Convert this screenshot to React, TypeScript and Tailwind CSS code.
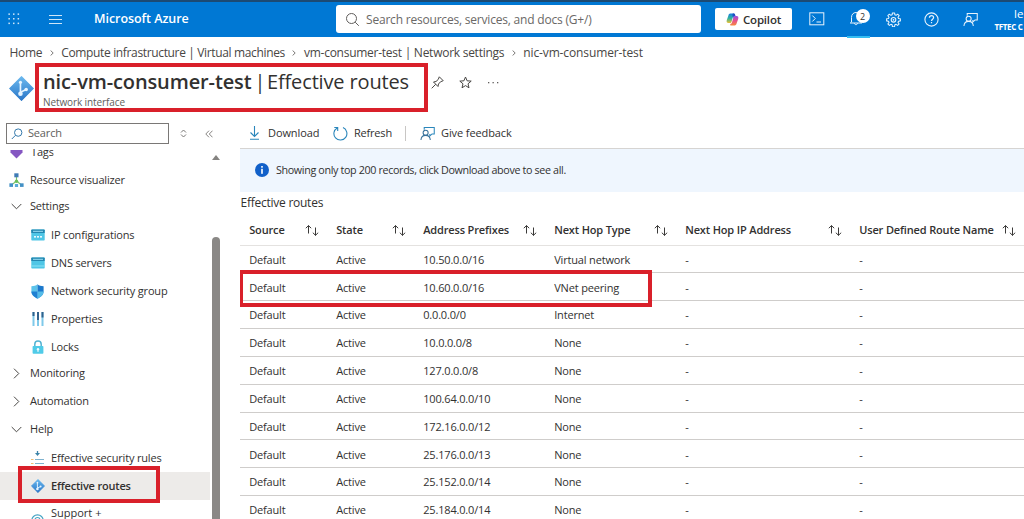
import type { ReactNode } from "react";

const ROUTES = [
  { prefix: "10.50.0.0/16", hop: "Virtual network" },
  { prefix: "10.60.0.0/16", hop: "VNet peering" },
  { prefix: "0.0.0.0/0", hop: "Internet" },
  { prefix: "10.0.0.0/8", hop: "None" },
  { prefix: "127.0.0.0/8", hop: "None" },
  { prefix: "100.64.0.0/10", hop: "None" },
  { prefix: "172.16.0.0/12", hop: "None" },
  { prefix: "25.176.0.0/13", hop: "None" },
  { prefix: "25.152.0.0/14", hop: "None" },
  { prefix: "25.184.0.0/14", hop: "None" },
];

const COLUMNS = ["Source", "State", "Address Prefixes", "Next Hop Type", "Next Hop IP Address", "User Defined Route Name"];

const GRID = "grid grid-cols-[87px_87px_131px_131px_174px_174px] pl-[9.200px]";

function Waffle() {
  return (
    <svg width="12" height="12" viewBox="0 0 12 12" fill="#cfe6f8">
      {[0, 4.6, 9.2].map((y) => [0, 4.6, 9.2].map((x) => <rect key={`${x}-${y}`} x={x + 0.4} y={y + 0.4} width="1.5" height="1.5" />))}
    </svg>
  );
}

function CopilotLogo() {
  return (
    <svg width="13" height="13" viewBox="0 0 24 24">
      <defs>
        <linearGradient id="cpA" x1="0" y1="0" x2="0" y2="1">
          <stop offset="0" stopColor="#1b7fe0" />
          <stop offset="0.5" stopColor="#2fb2a0" />
          <stop offset="1" stopColor="#f0c030" />
        </linearGradient>
        <linearGradient id="cpB" x1="0" y1="0" x2="0" y2="1">
          <stop offset="0" stopColor="#9a4fe0" />
          <stop offset="0.5" stopColor="#e8518c" />
          <stop offset="1" stopColor="#f58a3c" />
        </linearGradient>
      </defs>
      <path d="M16.5 2.5C16 1.2 15.2 1 14 1H8C5.800 1 5 2.500 4.300 5L1.500 13c-1 3.500 0 5.500 3 5.500h3.200c1.300 0 2-.8 2.500-2.300L13 6.500c.5-1.500 1.200-2.300 2.500-2.300z" fill="url(#cpA)" />
      <path d="M7.500 21.500c.5 1.300 1.300 1.500 2.500 1.500h6c2.200 0 3-1.500 3.700-4l2.800-8c1-3.500 0-5.500-3-5.500h-3.200c-1.300 0-2 .8-2.500 2.300L11 17.500c-.5 1.500-1.200 2.300-2.500 2.300z" fill="url(#cpB)" />
      <path d="M12.500 1h2c1.600 0 2.100 1.400 2.600 3l.5 1.500h-1.300c-1.300 0-2 .8-2.500 2.300l-.8 2.400L11.800 3z" fill="#1f4fc4" />
    </svg>
  );
}

function Feedback({ size, stroke, person }: { size: number; stroke: string; person: string }) {
  return (
    <svg width={size} height={size} viewBox="0 0 16 16" fill="none" strokeWidth="1.100">
      <path d="M4.500 4V1.500h10.700v7h-2.400l-2.300 2.300V8.500" stroke={stroke} />
      <circle cx="6" cy="7.300" r="2.700" stroke={person} />
      <path d="M1 15c.2-3 2.300-5 5-5s4.800 2 5 5" stroke={person} />
    </svg>
  );
}

function Gear() {
  return (
    <svg width="15" height="15" viewBox="0 0 24 24" fill="none" stroke="#e8f3fc" strokeWidth="1.700" strokeLinejoin="round">
      <path d="M10.300 1.500h3.400l.5 3 1.900.8 2.500-1.800 2.400 2.400-1.800 2.500.8 1.900 3 .5v3.400l-3 .5-.8 1.900 1.800 2.500-2.400 2.400-2.500-1.800-1.900.8-.5 3h-3.400l-.5-3-1.900-.8-2.500 1.800L3 19.100l1.800-2.500-.8-1.900-3-.5v-3.400l3-.5.8-1.900L3 5.900l2.400-2.400 2.500 1.800 1.900-.8z" />
      <circle cx="12" cy="12.500" r="3.700" />
      <circle cx="12" cy="12.500" r=".6" />
    </svg>
  );
}

function NicIcon({ size, id }: { size: number; id: string }) {
  return (
    <svg width={size} height={size} viewBox="0 0 24 24">
      <defs>
        <linearGradient id={id} x1="0" y1="0" x2="0" y2="1">
          <stop offset="0" stopColor="#6ab8ee" />
          <stop offset="1" stopColor="#2b77c8" />
        </linearGradient>
      </defs>
      <path d="M12 .6 23.400 12 12 23.400.6 12z" fill={`url(#${id})`} stroke={`url(#${id})`} strokeWidth="1" strokeLinejoin="round" />
      <path d="M11 6v11M11 15.500l5.500-2.500" stroke="#e6f4ff" strokeWidth="1.600" fill="none" />
      <circle cx="11" cy="6" r="1.500" fill="#e6f4ff" />
      <circle cx="11" cy="17" r="2.200" fill="#e6f4ff" />
      <circle cx="16.500" cy="13" r="1.700" fill="#e6f4ff" />
    </svg>
  );
}

function ServerIcon({ dots }: { dots?: boolean }) {
  return (
    <svg width="14" height="12" viewBox="0 0 14 12">
      <rect x=".3" y=".5" width="13.400" height="11" rx=".7" fill="#4fc6e6" />
      <path d="M.3 1.200Q.3.500 1 .5h12q.7 0 .7.700V4H.3z" fill="#2487b0" />
      <rect x="2" y="1.800" width="10" height="1.100" fill="#8fd6ee" />
      {dots ? (
        <g fill="#e8fbff">
          <rect x="3" y="7" width="2" height="1.600" />
          <rect x="6" y="7" width="2" height="1.600" />
          <rect x="9" y="7" width="2" height="1.600" />
        </g>
      ) : (
        <rect x=".3" y="8.500" width="13.400" height="1" fill="#8be4f5" />
      )}
    </svg>
  );
}

function ShieldIcon() {
  return (
    <svg width="13" height="15" viewBox="0 0 13 15">
      <path d="M6.500.3C5 1.700 2.800 2.200.4 2.300v5c0 3.500 2.700 5.700 6.100 7.400z" fill="#5cc3ea" />
      <path d="M6.500.3c1.500 1.400 3.700 1.900 6.100 2v5c0 3.500-2.700 5.700-6.100 7.400z" fill="#1b78cc" />
      <path d="M.4 7.500h6.100v7.200C3.100 13 .4 10.800.4 7.500z" fill="#1f80d2" />
      <path d="M6.500 7.500h6.100c0 3.300-2.700 5.500-6.100 7.200z" fill="#55bce8" />
    </svg>
  );
}

function PropertiesIcon() {
  return (
    <svg width="12" height="14" viewBox="0 0 12 14">
      <rect x=".5" y="0" width="2" height="14" fill="#7fc9ea" />
      <rect x="5" y="0" width="2" height="14" fill="#7fc9ea" />
      <rect x="9.500" y="0" width="2" height="14" fill="#7fc9ea" />
      <rect x=".5" y="0" width="2" height="4" fill="#31618c" />
      <rect x="5" y="0" width="2" height="8" fill="#31618c" />
      <rect x="9.500" y="0" width="2" height="5.500" fill="#31618c" />
    </svg>
  );
}

function LockIcon() {
  return (
    <svg width="12" height="14" viewBox="0 0 12 14">
      <path d="M2.800 7V4.200a3.200 3.200 0 0 1 6.400 0V7" fill="none" stroke="#54b3d2" strokeWidth="1.500" />
      <rect x=".6" y="6" width="10.800" height="7.700" rx=".8" fill="#50cbe8" />
      <circle cx="6" cy="9.300" r="1.200" fill="#f0fcff" />
      <path d="M5.500 9.500h1V12h-1z" fill="#f0fcff" />
    </svg>
  );
}

function VisualizerIcon() {
  return (
    <svg width="15" height="15" viewBox="0 0 15 15">
      <path d="M7.500 3.500v4.500M7.500 8l-5 4M7.500 8l5 4" stroke="#7cc36c" strokeWidth="1.100" />
      <rect x="5.300" y=".3" width="4.200" height="4" fill="#3f7bb5" />
      <circle cx="7.500" cy="8.300" r="1.700" fill="#6bbf59" />
      <rect x=".4" y="10.300" width="3.600" height="3.600" fill="#4391c6" />
      <rect x="5.900" y="11" width="3.200" height="3" fill="#5aabd8" />
      <rect x="11" y="10.300" width="3.600" height="3.600" fill="#4391c6" />
    </svg>
  );
}

function SecurityRulesIcon() {
  return (
    <svg width="13" height="14" viewBox="0 0 13 14" fill="none">
      <path d="M6.500 0v3" stroke="#3c83a8" strokeWidth="1.300" />
      <path d="M4 2h5L6.500 5z" fill="#3c83a8" />
      <path d="M4 8.500h9M4 12.500h9" stroke="#7fb3cf" />
      <path d="M0 8.500h2.500M0 12.500h2.500" stroke="#f0bd72" />
    </svg>
  );
}

function SupportIcon() {
  return (
    <svg width="13" height="13" viewBox="0 0 13 13" fill="none">
      <circle cx="6.500" cy="6.500" r="5.700" stroke="#46a4c4" strokeWidth="1.200" />
      <circle cx="6.500" cy="6" r="2.500" stroke="#46a4c4" strokeWidth="1.200" />
    </svg>
  );
}

function SortArrows() {
  return (
    <svg width="14" height="11" viewBox="0 0 14 11" fill="none" stroke="#3b3a39" strokeWidth="1">
      <path d="M3.500 8.500v-8M.8 3.200 3.500.6l2.700 2.600" />
      <path d="M10.500 2.500v8M7.800 7.700l2.700 2.600 2.700-2.600" />
    </svg>
  );
}

function Chevron({ open }: { open?: boolean }) {
  return (
    <svg width="11" height="11" viewBox="0 0 11 11" fill="none" stroke="#484644" strokeWidth="1">
      {open ? <path d="M.7 3 5.500 7.800 10.300 3" /> : <path d="M3 .7 7.800 5.500 3 10.300" />}
    </svg>
  );
}

function CrumbSep() {
  return (
    <svg className="mx-[7.500px]" width="4" height="6" viewBox="0 0 4 6" fill="none" stroke="#6b6967" strokeWidth=".9">
      <path d="M.6.5 3.200 3 .6 5.500" />
    </svg>
  );
}

function NavGroup({ label, open }: { label: string; open?: boolean }) {
  return (
    <div className="flex h-[27.800px] items-center pl-[11px]">
      <Chevron open={open} />
      <span className="ml-2">{label}</span>
    </div>
  );
}

function NavItem({ icon, label, active }: { icon: ReactNode; label: string; active?: boolean }) {
  return (
    <div className={`flex h-[27.900px] w-[210px] shrink-0 items-center pl-[30px] ${active ? "bg-[#edebe9] font-semibold tracking-[-0.2px]" : ""}`}>
      <span className="flex w-[15px] justify-center">{icon}</span>
      <span className="ml-1.5">{label}</span>
    </div>
  );
}

function TopBar() {
  return (
    <header className="relative flex h-[36.500px] shrink-0 items-center border-t-2 border-[#1c4a73] bg-[#0078d4] text-white">
      <div className="flex w-[336px] items-center pl-2">
        <Waffle />
        <svg className="ml-[29px]" width="13" height="11" viewBox="0 0 13 11" stroke="#cfe6f8" strokeWidth="1">
          <path d="M0 1.500h13M0 5.500h13M0 9.500h13" />
        </svg>
        <span className="ml-8 pt-px text-[12.500px] font-semibold tracking-[-0.050px]">Microsoft Azure</span>
      </div>
      <div className="flex h-7 w-[365px] items-center rounded-[3px] bg-white pl-[9px] text-[#6a6866]">
        <svg width="15" height="15" viewBox="0 0 15 15" fill="none" stroke="#605e5c" strokeWidth="1">
          <circle cx="6.500" cy="6.500" r="5" />
          <path d="m10.200 10.200 3.600 3.600" />
        </svg>
        <span className="ml-1.5 pt-px text-xs tracking-[-0.2px]">Search resources, services, and docs (G+/)</span>
      </div>
      <div className="ml-3.5 flex h-[22px] w-[77px] items-center rounded-[2px] bg-white pl-[11px] text-[#323130]">
        <CopilotLogo />
        <span className="ml-1 text-[11.500px] font-semibold tracking-[-0.2px]">Copilot</span>
      </div>
      <svg className="ml-[17px]" width="16" height="14" viewBox="0 0 16 14" fill="none" stroke="#e8f3fc">
        <rect x=".8" y=".8" width="14" height="12" />
        <path d="M3.300 3.500 6.300 6.500 3.300 9.500M7.500 10h4.500" />
      </svg>
      <div className="relative ml-6 h-4 w-4">
        <svg width="14" height="15" viewBox="0 0 14 15" fill="none" stroke="#e8f3fc">
          <path d="M2.500 11V6.500C2.500 3.500 4.300 1.500 7 1.500s4.500 2 4.500 5V11l1.200 1H1.300zM5.300 12c.2 2.200 3.200 2.200 3.400 0" />
        </svg>
        <span className="absolute -top-[2px] left-[6.500px] flex size-[14px] items-center justify-center rounded-full bg-white text-[9px] text-[#323130]">2</span>
      </div>
      <span className="ml-[21px]">
        <Gear />
      </span>
      <svg className="ml-[23px]" width="15" height="15" viewBox="0 0 15 15" fill="none" stroke="#e8f3fc">
        <circle cx="7.500" cy="7.500" r="6.600" strokeWidth="1.100" />
        <path d="M5.400 5.800c0-1.300.9-2.100 2.100-2.100s2.100.8 2.100 1.900c0 1.500-2.100 1.700-2.100 3.300M7.500 10v1.300" strokeWidth="1.200" />
      </svg>
      <span className="ml-[24px]">
        <Feedback size={15} stroke="#e8f3fc" person="#e8f3fc" />
      </span>
      <div className="ml-auto flex w-[29.500px] flex-col whitespace-nowrap pt-0.5">
        <span className="pl-[19.500px] text-[11.500px] leading-[14px]">le</span>
        <span className="text-[8px] font-bold leading-3 tracking-[-0.350px]">TFTEC C</span>
      </div>
      <span className="absolute left-[847px] top-[34px] h-[2px] w-[23px] bg-[#35bdf2]" />
    </header>
  );
}

function Sidebar() {
  return (
    <aside className="flex w-[240px] shrink-0 flex-col text-[11px] tracking-[-0.17px] text-[#323130]">
      <div className="flex h-[22px] items-center pl-1.5">
        <div className="flex h-[21px] w-[163px] items-center border border-[#7a7876] pl-1 text-[#605e5c]">
          <svg width="12" height="12" viewBox="0 0 12 12" fill="none" stroke="#3579ab" strokeWidth="1">
            <circle cx="7.200" cy="4.600" r="3.700" />
            <path d="M4.500 7.300.8 11" />
          </svg>
          <span className="ml-[5px]">Search</span>
        </div>
        <svg className="ml-[10.500px]" width="7" height="9" viewBox="0 0 7 9" fill="none" stroke="#797775">
          <path d="M1 3.500 3.500 1 6 3.500M1 5.500 3.500 8 6 5.500" />
        </svg>
        <svg className="ml-[18.500px]" width="8" height="8" viewBox="0 0 8 8" fill="none" stroke="#797775" strokeWidth=".9">
          <path d="M4 .7.800 4 4 7.300M7.500.7 4.300 4l3.200 3.300" />
        </svg>
      </div>
      <div className="flex flex-1 overflow-hidden">
        <nav className="flex w-[210px] flex-col">
          <div className="flex h-[23px] shrink-0 items-start overflow-hidden pl-[10px]">
            <svg className="mt-[5px]" width="13" height="9" viewBox="0 0 13 9">
              <path d="M.5 0h12v2.500L6.500 8.500.5 2.500z" fill="#8557c2" />
            </svg>
            <span className="-mt-[0.500px] ml-2 h-4 leading-4 [clip-path:inset(5px_0_0_0)]">Tags</span>
          </div>
          <div className="flex h-[25px] shrink-0 items-center pl-[9px]">
            <VisualizerIcon />
            <span className="ml-1.5">Resource visualizer</span>
          </div>
          <div className="h-[27px] shrink-0">
            <NavGroup label="Settings" open />
          </div>
          <div className="mt-[2px] flex shrink-0 flex-col">
            <NavItem icon={<ServerIcon dots />} label="IP configurations" />
            <NavItem icon={<ServerIcon />} label="DNS servers" />
            <NavItem icon={<ShieldIcon />} label="Network security group" />
            <NavItem icon={<PropertiesIcon />} label="Properties" />
            <NavItem icon={<LockIcon />} label="Locks" />
          </div>
          <div className="-mt-[1.300px] shrink-0">
            <NavGroup label="Monitoring" />
            <NavGroup label="Automation" />
            <NavGroup label="Help" open />
          </div>
          <div className="relative mt-[1.300px] flex shrink-0 flex-col">
            <NavItem icon={<SecurityRulesIcon />} label="Effective security rules" />
            <NavItem icon={<NicIcon size={14} id="nicSmall" />} label="Effective routes" active />
            <div className="flex pl-[30px]">
              <span className="mt-3.5 flex w-[15px] justify-center">
                <SupportIcon />
              </span>
              <span className="ml-1.5 mt-[5px] leading-4 tracking-normal">Support +</span>
            </div>
            <span className="absolute left-[18px] top-[22px] h-[37px] w-[142px] border-4 border-[#d9202a]" />
          </div>
        </nav>
        <div className="ml-[2px] flex w-2 flex-col items-center">
          <svg className="mt-2.5" width="8" height="5" viewBox="0 0 8 5">
            <path d="M4 0 8 5H0z" fill="#858381" />
          </svg>
          <span className="mt-[77px] w-2 flex-1 rounded-t-full bg-[#8a8886]" />
        </div>
      </div>
    </aside>
  );
}

function Toolbar() {
  return (
    <div className="flex h-[26px] items-center border-b border-[#d6d4d2] pb-1 pl-[9px] text-[11px] tracking-[-0.1px]">
      <svg width="11" height="14" viewBox="0 0 11 14" fill="none" stroke="#2a86bb" strokeWidth="1.100">
        <path d="M5.500 0v10.500M1.500 6.500l4 4 4-4M1 13.300h9" />
      </svg>
      <span className="ml-2 w-[53px]">Download</span>
      <svg className="ml-3" width="15" height="15" viewBox="0 0 15 15" fill="none" stroke="#2a86bb" strokeWidth="1.100">
        <path d="M10 1.600a6.500 6.500 0 1 1-5.800.3M1.300 1.500h3.400v3.400" />
      </svg>
      <span className="ml-1.5 w-[38px] tracking-[-0.2px]">Refresh</span>
      <span className="ml-[13px] h-[15px] w-px bg-[#c8c6c4]" />
      <span className="ml-[14px]">
        <Feedback size={15} stroke="#2a86bb" person="#36709a" />
      </span>
      <span className="ml-1.5">Give feedback</span>
    </div>
  );
}

function RoutesTable() {
  return (
    <div className="relative text-[11px] tracking-[-0.17px]">
      <div className={`${GRID} h-[32px] items-center border-b border-[#e4e2e0] font-semibold tracking-[-0.15px]`}>
        {COLUMNS.map((c) => (
          <div key={c} className="flex items-center justify-between whitespace-nowrap pr-[17px] pt-0.5">
            {c}
            <SortArrows />
          </div>
        ))}
      </div>
      {ROUTES.map((r) => (
        <div key={r.prefix} className={`${GRID} h-[27.850px] items-center border-b border-[#cfcdcb] pt-[2px]`}>
          <span>Default</span>
          <span>Active</span>
          <span>{r.prefix}</span>
          <span>{r.hop}</span>
          <span>-</span>
          <span>-</span>
        </div>
      ))}
      {/* peering route callout */}
      <span className="absolute -left-px top-[56px] h-[37px] w-[413px] border-4 border-[#d9202a]" />
    </div>
  );
}

export default function App() {
  return (
    <div className="flex h-[519px] w-[1024px] flex-col overflow-hidden bg-white font-['Open_Sans',sans-serif] text-[#323130]">
      <TopBar />
      <div className="flex h-8 shrink-0 items-center pl-[9.500px] text-xs text-[#484644]">
        <span className="tracking-[-0.3px]">Home</span>
        <CrumbSep />
        <span className="tracking-[-0.350px]">Compute infrastructure | Virtual machines</span>
        <CrumbSep />
        <span className="tracking-[-0.260px]">vm-consumer-test | Network settings</span>
        <CrumbSep />
        <span className="tracking-[-0.120px]">nic-vm-consumer-test</span>
      </div>
      <div className="relative flex h-[54px] shrink-0 pl-[9px]">
        <span className="mt-[7px]">
          <NicIcon size={25} id="nicLarge" />
        </span>
        <div className="ml-[9px] flex flex-col whitespace-nowrap">
          <h1 className="flex text-[20px] leading-[26px] tracking-[-0.150px]">
            <span className="w-[211.500px] font-semibold tracking-[-0.120px]">nic-vm-consumer-test</span>
            <span className="w-[12.500px]">|</span>
            <span>Effective routes</span>
          </h1>
          <span className="text-[10px] leading-[14px] tracking-[-0.1px] text-[#605e5c]">Network interface</span>
        </div>
        <div className="absolute left-[431px] top-[7px] flex items-center">
          <svg width="13" height="13" viewBox="0 0 13 13" fill="none" stroke="#484644" strokeWidth="1">
            <path d="M8.300.8 12.200 4.700 9.500 5.800 7.500 8 7 10.500 2.500 6 5 5.500 7.200 3.500zM4.800 8.200.7 12.300" />
          </svg>
          <svg className="ml-[15px]" width="13" height="13" viewBox="0 0 13 13" fill="none" stroke="#484644" strokeWidth="1">
            <path d="m6.500 1 1.600 3.800 4.100.3L9 7.800l1 4-3.500-2.200L3 11.800l1-4L.8 5.100l4.100-.3z" />
          </svg>
          <svg className="ml-4" width="11" height="3" viewBox="0 0 11 3" fill="#605e5c">
            <rect x="0" y="1" width="1.300" height="1.300" />
            <rect x="4.500" y="1" width="1.300" height="1.300" />
            <rect x="9" y="1" width="1.300" height="1.300" />
          </svg>
        </div>
        <span className="absolute left-[35px] top-[-6px] h-[49px] w-[393px] border-4 border-[#d9202a]" />
      </div>
      <div className="flex min-h-0 flex-1">
        <Sidebar />
        <main className="min-w-0 flex-1 overflow-hidden">
          <Toolbar />
          <div className="flex h-[43px] items-center bg-[#eff6fe] pl-[15px] text-[10.750px]">
            <svg width="14" height="14" viewBox="0 0 14 14">
              <circle cx="7" cy="7" r="7" fill="#1160c9" />
              <rect x="6.200" y="5.800" width="1.600" height="5" fill="#fff" />
              <rect x="6.200" y="3" width="1.600" height="1.700" fill="#fff" />
            </svg>
            <span className="ml-[7px] pt-px tracking-[-0.360px]">Showing only top 200 records, click Download above to see all.</span>
          </div>
          <div className="flex h-[22px] items-center pl-[0.500px] text-xs tracking-[-0.250px]">Effective routes</div>
          <RoutesTable />
        </main>
      </div>
    </div>
  );
}
